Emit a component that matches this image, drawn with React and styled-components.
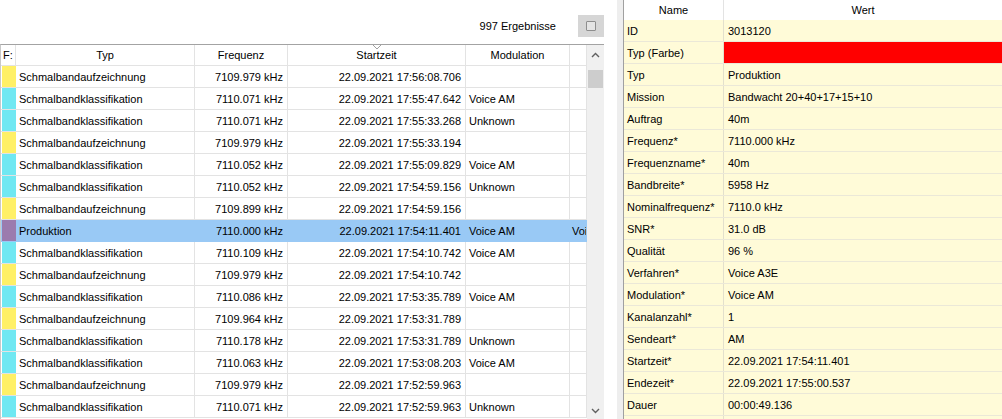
import React from "react";
import styled, { createGlobalStyle } from "styled-components";

const Global = createGlobalStyle`
  html, body { margin: 0; padding: 0; background: #fff; }
  body { font-family: "Liberation Sans", Arial, sans-serif; font-size: 11px; color: #000; }
  #root { width: 1002px; height: 419px; overflow: hidden; }
`;

const Screen = styled.div`
  display: flex;
  width: 1002px;
  height: 419px;
  overflow: hidden;
  background: #fff;
`;

const LeftPanel = styled.div`
  width: 604px;
  display: flex;
  flex-direction: column;
`;

const TopBar = styled.div`
  box-sizing: border-box;
  flex-shrink: 0;
  height: 44px;
  padding-top: 7px;
  display: flex;
  align-items: center;
  justify-content: flex-end;
  gap: 22px;
`;

const ResultCount = styled.span`
  font-size: 11px;
  color: #000;
`;

const IconButton = styled.div`
  width: 26px;
  height: 22px;
  background: #d6d6d6;
  display: flex;
  align-items: center;
  justify-content: center;
`;

const SmallSquare = styled.span`
  box-sizing: border-box;
  width: 10px;
  height: 10px;
  border: 1px solid #8e8e8e;
  border-radius: 1px;
  background: #e4e4e4;
`;

const TableFrame = styled.div`
  flex: 1;
  display: flex;
  border-top: 1px solid #a3a3a3;
  border-left: 1px solid #c8c8c8;
  min-height: 0;
`;

const Grid = styled.div`
  width: 586px;
  display: flex;
  flex-direction: column;
`;

const cols = "15px 179px 93px 178px 104px 17px";

const HeaderRow = styled.div`
  flex-shrink: 0;
  display: grid;
  grid-template-columns: ${cols};
  height: 21px;
  box-sizing: border-box;
  border-bottom: 1px solid #e3e3e3;
`;

const HeaderCell = styled.div`
  position: relative;
  box-sizing: border-box;
  border-right: 1px solid #e3e3e3;
  display: flex;
  align-items: center;
  justify-content: ${(p) => (p.$left ? "flex-start" : "center")};
  padding-left: ${(p) => (p.$left ? "2px" : "0")};
  overflow: hidden;
  white-space: nowrap;
`;

const SortMark = styled.svg`
  position: absolute;
  top: -1px;
  left: 50%;
  margin-left: -5px;
`;

const Row = styled.div`
  flex-shrink: 0;
  display: grid;
  grid-template-columns: ${cols};
  height: 22px;
  box-sizing: border-box;
  border-bottom: 1px solid ${(p) => (p.$selected ? "#99c9f5" : "#e3e3e3")};
  background: ${(p) => (p.$selected ? "#99c9f5" : "#fff")};
`;

const Cell = styled.div`
  box-sizing: border-box;
  border-right: 1px solid ${(p) => (p.$selected ? "#99c9f5" : "#e3e3e3")};
  display: flex;
  align-items: center;
  justify-content: ${(p) => (p.$right ? "flex-end" : "flex-start")};
  padding: ${(p) => (p.$right ? "0 4px 0 0" : `0 0 0 ${p.$tight ? 2 : 3}px`)};
  overflow: hidden;
  white-space: nowrap;
`;

const SwatchCell = styled.div`
  box-sizing: border-box;
  padding: 0 0 0 1px;
  display: flex;
`;

const Swatch = styled.div`
  flex: 1;
  background: ${(p) => p.$color};
`;

const ScrollBar = styled.div`
  width: 17px;
  background: #f0f0f0;
  display: flex;
  flex-direction: column;
  align-items: center;
`;

const ScrollArrow = styled.div`
  flex-shrink: 0;
  height: ${(p) => p.$h}px;
  width: 17px;
  display: flex;
  align-items: center;
  justify-content: center;
`;

const Thumb = styled.div`
  flex-shrink: 0;
  margin-top: 5px;
  width: 15px;
  height: 18px;
  background: #cdcdcd;
`;

const ScrollSpace = styled.div`
  flex: 1;
`;

const Splitter = styled.div`
  box-sizing: border-box;
  width: 19px;
  border-right: 6px solid #eeeeee;
`;

const RightPanel = styled.div`
  flex: 1;
  border-left: 1px solid #a0a0a0;
  display: flex;
  flex-direction: column;
  overflow: hidden;
`;

const propCols = "100px 1fr";

const PropHeader = styled.div`
  flex-shrink: 0;
  display: grid;
  grid-template-columns: ${propCols};
  height: 20px;
  background: #fff;
`;

const PropHeaderCell = styled.div`
  box-sizing: border-box;
  border-right: ${(p) => (p.$last ? "none" : "1px solid #e3e3e3")};
  display: flex;
  align-items: center;
  justify-content: center;
`;

const PropRow = styled.div`
  flex-shrink: 0;
  display: grid;
  grid-template-columns: ${propCols};
  height: 22px;
  box-sizing: border-box;
  border-bottom: 1px solid #ebe8d8;
  background: #fffbd8;
`;

const PropName = styled.div`
  box-sizing: border-box;
  border-right: 1px solid #e3e0cc;
  display: flex;
  align-items: center;
  padding-left: 3px;
  white-space: nowrap;
  overflow: hidden;
`;

const PropValue = styled.div`
  display: flex;
  align-items: center;
  padding-left: 4px;
  white-space: nowrap;
  overflow: hidden;
  background: ${(p) => p.$fill || "transparent"};
`;

const YEL = "#fff066";
const CYA = "#70e8f2";
const PUR = "#9b7bae";

const rows = [
  [YEL, "Schmalbandaufzeichnung", "7109.979 kHz", "22.09.2021 17:56:08.706", ""],
  [CYA, "Schmalbandklassifikation", "7110.071 kHz", "22.09.2021 17:55:47.642", "Voice AM"],
  [CYA, "Schmalbandklassifikation", "7110.071 kHz", "22.09.2021 17:55:33.268", "Unknown"],
  [YEL, "Schmalbandaufzeichnung", "7109.979 kHz", "22.09.2021 17:55:33.194", ""],
  [CYA, "Schmalbandklassifikation", "7110.052 kHz", "22.09.2021 17:55:09.829", "Voice AM"],
  [CYA, "Schmalbandklassifikation", "7110.052 kHz", "22.09.2021 17:54:59.156", "Unknown"],
  [YEL, "Schmalbandaufzeichnung", "7109.899 kHz", "22.09.2021 17:54:59.156", ""],
  [PUR, "Produktion", "7110.000 kHz", "22.09.2021 17:54:11.401", "Voice AM", "Voi", true],
  [CYA, "Schmalbandklassifikation", "7110.109 kHz", "22.09.2021 17:54:10.742", "Voice AM"],
  [YEL, "Schmalbandaufzeichnung", "7109.979 kHz", "22.09.2021 17:54:10.742", ""],
  [CYA, "Schmalbandklassifikation", "7110.086 kHz", "22.09.2021 17:53:35.789", "Voice AM"],
  [YEL, "Schmalbandaufzeichnung", "7109.964 kHz", "22.09.2021 17:53:31.789", ""],
  [CYA, "Schmalbandklassifikation", "7110.178 kHz", "22.09.2021 17:53:31.789", "Unknown"],
  [CYA, "Schmalbandklassifikation", "7110.063 kHz", "22.09.2021 17:53:08.203", "Voice AM"],
  [YEL, "Schmalbandaufzeichnung", "7109.979 kHz", "22.09.2021 17:52:59.963", ""],
  [CYA, "Schmalbandklassifikation", "7110.071 kHz", "22.09.2021 17:52:59.963", "Unknown"],
];

const props = [
  ["ID", "3013120"],
  ["Typ (Farbe)", "", "#ff0000"],
  ["Typ", "Produktion"],
  ["Mission", "Bandwacht 20+40+17+15+10"],
  ["Auftrag", "40m"],
  ["Frequenz*", "7110.000 kHz"],
  ["Frequenzname*", "40m"],
  ["Bandbreite*", "5958 Hz"],
  ["Nominalfrequenz*", "7110.0 kHz"],
  ["SNR*", "31.0 dB"],
  ["Qualität", "96 %"],
  ["Verfahren*", "Voice A3E"],
  ["Modulation*", "Voice AM"],
  ["Kanalanzahl*", "1"],
  ["Sendeart*", "AM"],
  ["Startzeit*", "22.09.2021 17:54:11.401"],
  ["Endezeit*", "22.09.2021 17:55:00.537"],
  ["Dauer", "00:00:49.136"],
  ["", ""],
];

const Chevron = ({ up }) => (
  <svg width="9" height="6" viewBox="0 0 9 6">
    <polyline
      points={up ? "1,5 4.5,1.5 8,5" : "1,1 4.5,4.5 8,1"}
      fill="none"
      stroke="#606060"
      strokeWidth="1.4"
    />
  </svg>
);

export default function App() {
  return (
    <>
      <Global />
      <Screen>
        <LeftPanel>
          <TopBar>
            <ResultCount>997 Ergebnisse</ResultCount>
            <IconButton>
              <SmallSquare />
            </IconButton>
          </TopBar>
          <TableFrame>
            <Grid>
              <HeaderRow>
                <HeaderCell $left>F:</HeaderCell>
                <HeaderCell>Typ</HeaderCell>
                <HeaderCell>Frequenz</HeaderCell>
                <HeaderCell>
                  <SortMark width="10" height="6" viewBox="0 0 10 6">
                    <polyline points="1,1 5,5 9,1" fill="none" stroke="#a0a0a0" strokeWidth="1" />
                  </SortMark>
                  Startzeit
                </HeaderCell>
                <HeaderCell>Modulation</HeaderCell>
                <HeaderCell />
              </HeaderRow>
              {rows.map((r, i) => {
                const sel = !!r[6];
                return (
                  <Row key={i} $selected={sel}>
                    <SwatchCell>
                      <Swatch $color={r[0]} />
                    </SwatchCell>
                    <Cell $selected={sel}>{r[1]}</Cell>
                    <Cell $selected={sel} $right>{r[2]}</Cell>
                    <Cell $selected={sel} $right>{r[3]}</Cell>
                    <Cell $selected={sel}>{r[4]}</Cell>
                    <Cell $selected={sel} $tight>{r[5] || ""}</Cell>
                  </Row>
                );
              })}
            </Grid>
            <ScrollBar>
              <ScrollArrow $h={20}>
                <Chevron up />
              </ScrollArrow>
              <Thumb />
              <ScrollSpace />
              <ScrollArrow $h={17}>
                <Chevron />
              </ScrollArrow>
            </ScrollBar>
          </TableFrame>
        </LeftPanel>
        <Splitter />
        <RightPanel>
          <PropHeader>
            <PropHeaderCell>Name</PropHeaderCell>
            <PropHeaderCell $last>Wert</PropHeaderCell>
          </PropHeader>
          {props.map((p, i) => (
            <PropRow key={i}>
              <PropName>{p[0]}</PropName>
              <PropValue $fill={p[2]}>{p[1]}</PropValue>
            </PropRow>
          ))}
        </RightPanel>
      </Screen>
    </>
  );
}
